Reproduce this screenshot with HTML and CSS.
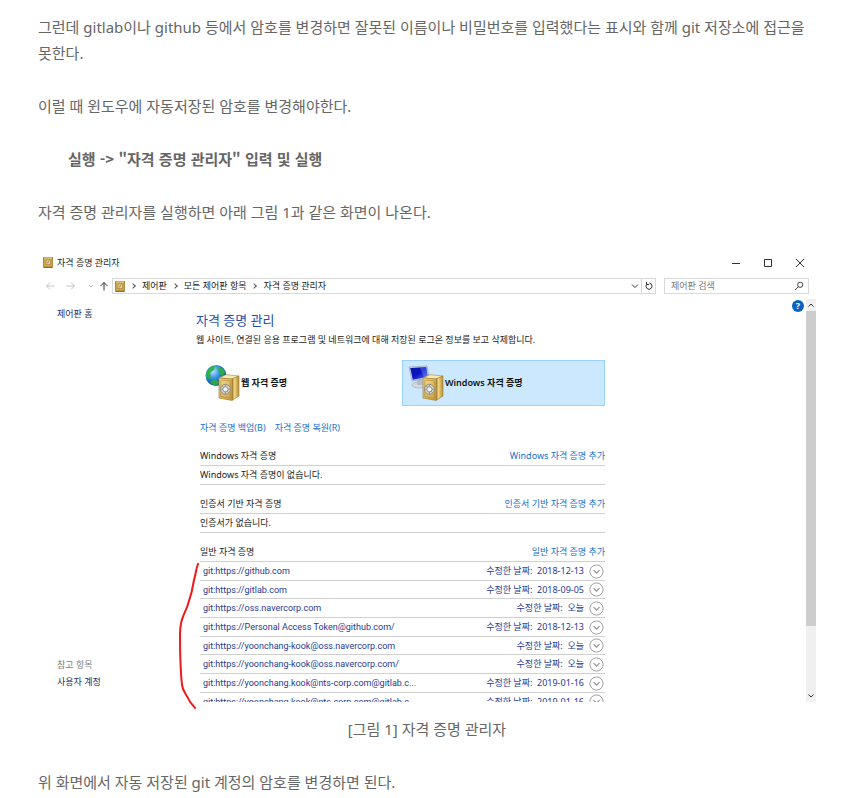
FILE: index.html
```
<!DOCTYPE html>
<html lang="ko">
<head>
<meta charset="utf-8">
<title>자격 증명 관리자</title>
<link rel="stylesheet" href="styles.css">
</head>
<body>
<svg class="defs" aria-hidden="true">
  <defs>
    <linearGradient id="gold" x1="0" y1="0" x2="1" y2="1"><stop offset="0" stop-color="#f6e08f"/><stop offset="1" stop-color="#c89c40"/></linearGradient>
    <linearGradient id="side" x1="0" y1="0" x2="1" y2="0"><stop offset="0" stop-color="#a67c28"/><stop offset=".35" stop-color="#efd582"/><stop offset="1" stop-color="#b58c36"/></linearGradient>
    <radialGradient id="globe" cx=".35" cy=".3" r=".75"><stop offset="0" stop-color="#b8e6ff"/><stop offset=".45" stop-color="#2f8fe0"/><stop offset="1" stop-color="#07379a"/></radialGradient>
    <linearGradient id="screen" x1="0" y1="0" x2="1" y2="1"><stop offset="0" stop-color="#0a1a9c"/><stop offset=".5" stop-color="#0d12c8"/><stop offset="1" stop-color="#5b7df2"/></linearGradient>
    <symbol id="safe" viewBox="0 0 22 27">
      <path d="M1 4 8 0.600 21 2 14 5Z" fill="#f9eab0" stroke="#a98537" stroke-width=".6"/>
      <path d="M14 5 21 2V22L14 26.400Z" fill="url(#side)" stroke="#a07a2c" stroke-width=".6"/>
      <path d="M1 4 14 5V26.400L1 24Z" fill="url(#gold)" stroke="#a5802f" stroke-width=".7"/>
      <path d="M2.800 6 12.300 6.800V24.300L2.800 22.500Z" fill="none" stroke="#b18b3a" stroke-width=".7"/>
      <circle cx="7.400" cy="15.300" r="5" fill="#d2d2cc" stroke="#8c887d" stroke-width=".9"/>
      <circle cx="7.400" cy="15.300" r="2.600" fill="#f1f1ee" stroke="#95928b" stroke-width="1"/>
      <path d="M7.400 10.500v2.500M7.400 17.800v2.400M2.600 15.300h2.300M10 15.300h2.200M4.300 12l1.400 1.500M9.200 17.200l1.400 1.500" stroke="#8c887d" stroke-width=".8"/>
    </symbol>
    <symbol id="vault" viewBox="0 0 10 11">
      <rect x=".5" y=".5" width="9" height="9.500" fill="#cfa545" stroke="#b08a3c"/>
      <path d="M1 1h8" stroke="#efd487"/><path d="M.5 10.500h9" stroke="#8f6c2b"/>
      <path d="M3 3h4.500v4.500H3z" fill="#e0cf98" stroke="#a98d50" stroke-width=".7"/>
      <path d="M4 6.200 6.200 4.200" stroke="#8e7644" stroke-width=".8"/>
    </symbol>
    <symbol id="expand" viewBox="0 0 15 15"><circle cx="7.500" cy="7.500" r="6.600" fill="#fff" stroke="#a0a0a0"/><path d="M4.500 6.200 7.500 9.200 10.500 6.200" fill="none" stroke="#929292" stroke-width="1.200"/></symbol>
  </defs>
</svg>
<article class="post">
  <p>그런데 gitlab이나 github 등에서 암호를 변경하면 잘못된 이름이나 비밀번호를 입력했다는 표시와 함께 git 저장소에 접근을 못한다.</p>
  <p>이럴 때 윈도우에 자동저장된 암호를 변경해야한다.</p>
  <blockquote><strong>실행 -&gt; "자격 증명 관리자" 입력 및 실행</strong></blockquote>
  <p>자격 증명 관리자를 실행하면 아래 그림 1과 같은 화면이 나온다.</p>
  <figure>
    <div class="window">
      <header class="titlebar">
        <svg class="vault"><use href="#vault"/></svg>
        <span class="title">자격 증명 관리자</span>
        <button type="button" aria-label="최소화"><svg viewBox="0 0 10 10"><path d="M1 5.500h8"/></svg></button>
        <button type="button" aria-label="최대화"><svg viewBox="0 0 10 10"><path d="M1.500 1.500h7v7h-7z"/></svg></button>
        <button type="button" aria-label="닫기"><svg viewBox="0 0 10 10"><path d="m1 1 8 8M9 1 1 9"/></svg></button>
      </header>
      <nav class="toolbar">
        <div class="history">
          <button type="button" class="dim" aria-label="뒤로"><svg viewBox="0 0 10 10"><path d="M9.500 5h-8M5 1.500 1.500 5 5 8.500"/></svg></button>
          <button type="button" class="dim" aria-label="앞으로"><svg viewBox="0 0 10 10"><path d="M.5 5h8M5 1.500 8.500 5 5 8.500"/></svg></button>
          <button type="button" class="dim small" aria-label="최근 위치"><svg viewBox="0 0 10 10"><path d="M3 4l2 2 2-2"/></svg></button>
          <button type="button" class="up" aria-label="위로"><svg viewBox="0 0 10 10"><path d="M5 9.500V1.500M1.500 5 5 1.500 8.500 5"/></svg></button>
        </div>
        <div class="address">
          <svg class="vault"><use href="#vault"/></svg>
          <i class="sep"></i><a href="#">제어판</a>
          <i class="sep"></i><a href="#">모든 제어판 항목</a>
          <i class="sep"></i><a href="#">자격 증명 관리자</a>
          <button type="button" class="drop" aria-label="이전 위치"><svg viewBox="0 0 10 10"><path d="M2 3.500l3 3 3-3"/></svg></button>
          <button type="button" class="reload" aria-label="새로 고침"><svg viewBox="0 0 10 10"><path d="M3 3a3 3 0 1 0 4 0M2.500 1v2.500h2.500M7.500 3 5.500 2"/></svg></button>
        </div>
        <div class="search">
          <input type="text" placeholder="제어판 검색" aria-label="제어판 검색">
          <svg viewBox="0 0 10 10"><circle cx="6.200" cy="3.800" r="2.600"/><path d="M4.200 5.800 1 9"/></svg>
        </div>
      </nav>
      <div class="content">
        <aside>
          <a href="#">제어판 홈</a>
          <div class="related"><span>참고 항목</span><a href="#">사용자 계정</a></div>
        </aside>
        <main>
          <h2>자격 증명 관리</h2>
          <p class="lead">웹 사이트, 연결된 응용 프로그램 및 네트워크에 대해 저장된 로그온 정보를 보고 삭제합니다.</p>
          <div class="inner">
            <div class="tiles">
              <button type="button" class="tile">
                <svg viewBox="0 0 36 38"><circle cx="12" cy="11.500" r="10.500" fill="url(#globe)"/><path d="M3 7C5 3 8 2 11 2L10 6 6 9 7 13 4 15C1 12 2 9 3 7ZM14 3C18 3 21 6 21 9L18 12 15 9ZM6 18 11 15 15 18 13 22C10 22 7 20 6 18Z" fill="#2fae3f" opacity=".9"/><use href="#safe" x="14" y="10" width="22" height="27"/></svg>
                <span>웹 자격 증명</span>
              </button>
              <button type="button" class="tile selected">
                <svg viewBox="0 0 36 38"><ellipse cx="11" cy="21" rx="7" ry="3" fill="#d4d9df" stroke="#9ba5b2" stroke-width=".6"/><path d="M9 14h5l1 7H9z" fill="#b3bdc8"/><path d="M1 3 19 2 21 14 4 17Z" fill="#d9e5f2" stroke="#7d93b4" stroke-width=".6"/><path d="M2.200 4 18.200 3 19.900 13 4.800 15.800Z" fill="url(#screen)"/><path d="M12 3.400 18.200 3 19.900 13 16 13.700Z" fill="#7e9cff" opacity=".35"/><use href="#safe" x="14" y="10" width="22" height="27"/></svg>
                <span>Windows 자격 증명</span>
              </button>
            </div>
            <div class="actions"><a href="#">자격 증명 백업(B)</a><a href="#">자격 증명 복원(R)</a></div>
            <section>
              <div class="head"><h3>Windows 자격 증명</h3><a href="#">Windows 자격 증명 추가</a></div>
              <p class="empty">Windows 자격 증명이 없습니다.</p>
            </section>
            <section>
              <div class="head"><h3>인증서 기반 자격 증명</h3><a href="#">인증서 기반 자격 증명 추가</a></div>
              <p class="empty">인증서가 없습니다.</p>
            </section>
            <section>
              <div class="head"><h3>일반 자격 증명</h3><a href="#">일반 자격 증명 추가</a></div>
              <table>
                <tbody>
                  <tr><td>git:https://github.com</td><td>수정한 날짜: &nbsp;2018-12-13</td><td><button type="button" aria-label="펼치기"><svg><use href="#expand"/></svg></button></td></tr>
                  <tr><td>git:https://gitlab.com</td><td>수정한 날짜: &nbsp;2018-09-05</td><td><button type="button" aria-label="펼치기"><svg><use href="#expand"/></svg></button></td></tr>
                  <tr><td>git:https://oss.navercorp.com</td><td>수정한 날짜: &nbsp;오늘</td><td><button type="button" aria-label="펼치기"><svg><use href="#expand"/></svg></button></td></tr>
                  <tr><td>git:https://Personal Access Token@github.com/</td><td>수정한 날짜: &nbsp;2018-12-13</td><td><button type="button" aria-label="펼치기"><svg><use href="#expand"/></svg></button></td></tr>
                  <tr><td>git:https://yoonchang-kook@oss.navercorp.com</td><td>수정한 날짜: &nbsp;오늘</td><td><button type="button" aria-label="펼치기"><svg><use href="#expand"/></svg></button></td></tr>
                  <tr><td>git:https://yoonchang-kook@oss.navercorp.com/</td><td>수정한 날짜: &nbsp;오늘</td><td><button type="button" aria-label="펼치기"><svg><use href="#expand"/></svg></button></td></tr>
                  <tr><td>git:https://yoonchang.kook@nts-corp.com@gitlab.c...</td><td>수정한 날짜: &nbsp;2019-01-16</td><td><button type="button" aria-label="펼치기"><svg><use href="#expand"/></svg></button></td></tr>
                  <tr><td>git:https://yoonchang.kook@nts-corp.com@gitlab.c</td><td>수정한 날짜: &nbsp;2019-01-16</td><td><button type="button" aria-label="펼치기"><svg><use href="#expand"/></svg></button></td></tr>
                </tbody>
              </table>
            </section>
          </div>
        </main>
        <button type="button" class="help" aria-label="도움말">?</button>
        <div class="scrollbar">
          <button type="button" aria-label="위로 스크롤"><svg viewBox="0 0 10 10"><path d="M2.500 6.500 5 4l2.500 2.500"/></svg></button>
          <div class="thumb"></div>
          <button type="button" class="down" aria-label="아래로 스크롤"><svg viewBox="0 0 10 10"><path d="M2.500 3.500 5 6l2.500-2.500"/></svg></button>
        </div>
      </div>
      <svg class="marker" viewBox="0 0 20 146" aria-hidden="true"><path d="M19 1C17 6 17 10 15 17 13 31 10 38 8 44 4 54 1 58 1 72 1 90 1 104 3 122 4 129 7 131 9 135 11 140 14 142 16 145"/></svg>
    </div>
    <figcaption>[그림 1] 자격 증명 관리자</figcaption>
  </figure>
  <p>위 화면에서 자동 저장된 git 계정의 암호를 변경하면 된다.</p>
</article>
</body>
</html>
```

FILE: styles.css
```
* { box-sizing: border-box; }
body {
  margin: 0;
  background: #fff;
  color: #666;
  font: 15px/26px "Noto Sans", "Noto Sans CJK KR", sans-serif;
  word-break: keep-all;
}
.defs { position: absolute; width: 0; height: 0; }
.post { padding: 14px 33px 0 38px; }
p, blockquote, figure, h2, h3 { margin: 0; }
.post > p, blockquote { margin-bottom: 27px; }
blockquote { padding-left: 30px; font-family: "Noto Sans CJK KR", sans-serif; }
figure { margin: -4px 0 27px; }
figcaption { margin-top: 14px; text-align: center; }
a { color: inherit; text-decoration: none; }
button { padding: 0; border: 0; background: none; color: inherit; font: inherit; display: flex; align-items: center; justify-content: center; }
button svg { width: 10px; height: 10px; fill: none; stroke: #333; }

.window { position: relative; color: #222; font-size: 9px; line-height: 14px; white-space: nowrap; }
.vault { width: 10px; height: 11px; flex: none; }
.titlebar { display: flex; align-items: center; height: 29px; padding-left: 5px; }
.title { flex: 1; margin-left: 4px; }
.titlebar button { width: 32px; height: 20px; }

.toolbar { display: flex; height: 18px; padding: 1px 7px 1px 0; margin-bottom: 4px; }
.history { display: flex; width: 74px; padding-left: 6px; }
.history button { width: 12px; margin-right: 9px; }
.history .small { width: 10px; margin-right: 2px; }
.history .up { margin-right: 0; }
.history .dim svg { stroke: #c4c4c4; }
.address { display: flex; flex: 1; align-items: center; border: 1px solid #d9d9d9; padding-left: 2px; }
.sep { width: 4px; height: 4px; border: solid #555; border-width: 1px 1px 0 0; transform: rotate(45deg); margin: 0 7px 0 6px; }
.drop { margin-left: auto; }
.reload { width: 14px; height: 100%; margin-left: 1px; border-left: 1px solid #d9d9d9; }
.search { display: flex; align-items: center; width: 145px; margin-left: 8px; border: 1px solid #d9d9d9; padding: 0 4px 0 6px; }
.search input { flex: 1; min-width: 0; padding: 0; border: 0; outline: 0; background: none; font: inherit; color: #666; }
.search input::placeholder { color: #767676; opacity: 1; }
.search svg { width: 10px; height: 10px; fill: none; stroke: #444; }

.content { display: flex; height: 403px; overflow: hidden; }
aside { display: flex; flex-direction: column; justify-content: space-between; flex: 0 0 158px; padding: 8px 0 13px 19px; color: #1e2f6b; }
.related { display: grid; gap: 3px; }
.related span { color: #808080; }
main { flex: 0 1 409px; min-width: 0; padding-top: 13px; }
h2 { font-size: 13px; line-height: 16px; font-weight: 400; color: #1f4fae; }
.lead { margin-top: 5px; }
.inner { padding-left: 4px; }
.tiles { display: grid; grid-template-columns: 1fr 1fr; gap: 1px; margin: 13px 0 0 -2px; }
.tile { height: 46px; justify-content: flex-start; padding-left: 5px; border: 1px solid transparent; font-weight: 600; color: #111; }
.tile svg { width: 36px; height: 38px; stroke: none; }
.tile span { margin-left: 1px; }
.selected { background: #cce8ff; border-color: #99d1ff; }
.actions { display: flex; gap: 9px; margin-top: 15px; color: #1670cf; }
.actions + section { margin-top: 12px; }
section { margin-bottom: 10px; }
.head, .empty { height: 19px; padding-top: 2px; border-bottom: 1px solid #d0d0d0; }
.head { display: flex; justify-content: space-between; }
.head a { color: #1670cf; }
h3 { font: inherit; }
table { width: 100%; border-collapse: separate; border-spacing: 0; color: #27398f; }
tr { height: 19px; }
tr:nth-child(3n + 2) { height: 18px; }
td { padding: 0; border-bottom: 1px solid #d0d0d0; vertical-align: middle; }
td:first-child { padding-left: 3px; font-family: Roboto, sans-serif; }
td:nth-child(2) { text-align: right; }
td:last-child { width: 21px; }
td button { margin-left: auto; }
td svg { width: 15px; height: 15px; stroke: none; margin-right: 1px; }
.help { width: 12px; height: 12px; margin: 1px 2px 0 auto; border-radius: 50%; background: #0762c4; color: #fff; font-weight: 700; line-height: 12px; }
.scrollbar { display: flex; flex-direction: column; width: 10px; background: #f0f0f0; }
.scrollbar button { height: 12px; }
.thumb { height: 315px; background: #cdcdcd; }
.down { margin-top: auto; }
.marker { position: absolute; left: 141px; top: 315px; width: 20px; height: 146px; fill: none; stroke: #f01818; stroke-width: 2; stroke-linecap: round; }
```
